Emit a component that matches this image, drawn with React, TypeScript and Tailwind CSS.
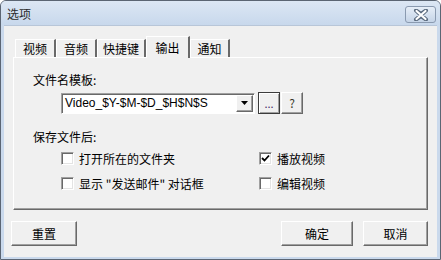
import { useState } from 'react';

const FONT = { fontFamily: '"Noto Sans CJK SC", "Liberation Sans", sans-serif' };

const tabs = [
  { label: '视频', w: 'w-[41px]' },
  { label: '音频', w: 'w-[41px]' },
  { label: '快捷键', w: 'w-[49px]' },
  { label: '输出', w: 'w-[44px]' },
  { label: '通知', w: 'w-[40px]' },
];

const CloseGlyph = () => (
  <svg width="16" height="12" viewBox="0 0 16 12">
    <path
      d="M3 1.5 L8 5 L13 1.5 M3 10.5 L8 7 L13 10.5 M3 1.5 L13 10.5 M13 1.5 L3 10.5"
      stroke="#5a6a7e"
      strokeWidth="4"
      strokeLinecap="round"
      fill="none"
    />
    <path d="M3.5 2 L12.5 10 M12.5 2 L3.5 10" stroke="#ffffff" strokeWidth="2.2" strokeLinecap="round" fill="none" />
  </svg>
);

const Checkbox = ({ checked, label }: { checked?: boolean; label: string }) => (
  <div className="flex items-center h-[13px]">
    <div className="w-[13px] h-[13px] bg-white border border-t-[#a0a0a0] border-l-[#a0a0a0] border-r-[#ffffff] border-b-[#ffffff] shadow-[inset_1px_1px_0_#696969,inset_-1px_-1px_0_#e3e3e3] flex items-center justify-center">
      {checked && (
        <svg width="9" height="9" viewBox="0 0 9 9">
          <path d="M1 4 L3.5 6.5 L8 1.5" stroke="#000" strokeWidth="1.8" fill="none" />
        </svg>
      )}
    </div>
    <span className="ml-[5px] text-[12px] leading-none text-black">{label}</span>
  </div>
);

const RaisedButton = ({ children, className }: { children: React.ReactNode; className?: string }) => (
  <button
    className={`h-[25px] bg-[#f0f0f0] border border-t-white border-l-white border-r-[#696969] border-b-[#696969] shadow-[inset_-1px_-1px_0_#a0a0a0] text-[12px] text-black flex items-center justify-center ${className ?? ''}`}
  >
    {children}
  </button>
);

export default function App() {
  const [active] = useState(3);

  return (
    <div
      className="w-[441px] h-[260px] bg-[#cad9ec] border border-[#5b6573] rounded-t-[6px] flex flex-col overflow-hidden"
      style={FONT}
    >
      {/* Title bar */}
      <div className="h-[24px] flex items-center justify-between pl-[6px] pr-[4px] bg-gradient-to-b from-[#dce7f4] to-[#c8d8ec]">
        <span className="text-[12px] text-[#2b2b2b] mt-[2px]">选项</span>
        <div className="w-[31px] h-[17px] mt-[3px] rounded-[3px] border border-[#8a9ab0] bg-gradient-to-b from-[#e6eef8] to-[#c5d4e7] flex items-center justify-center">
          <CloseGlyph />
        </div>
      </div>

      {/* Client area */}
      <div className="flex-1 mx-[3px] mb-[2px] bg-[#f0f0f0] border-t border-[#b8c6d8] pl-[9px] pr-[8px] pt-[10px] flex flex-col">
        {/* Tabs */}
        <div className="flex items-end h-[21px] pl-[2px] relative z-10">
          {tabs.map((t, i) =>
            i === active ? (
              <div
                key={t.label}
                className={`h-[22px] -mb-[1px] ${t.w} bg-[#f0f0f0] border-t border-l border-white border-r-2 border-r-[#696969] flex items-start justify-center pt-[2px] text-[12px] text-black`}
              >
                {t.label}
              </div>
            ) : (
              <div
                key={t.label}
                className={`h-[18px] ${t.w} bg-[#f0f0f0] border-t border-l border-white border-r-2 border-r-[#696969] flex items-center justify-center text-[12px] text-black`}
              >
                {t.label}
              </div>
            )
          )}
        </div>

        {/* Tab panel */}
        <div className="h-[153px] w-[415px] border border-t-white border-l-white border-r-[#696969] border-b-[#696969] shadow-[inset_-1px_-1px_0_#a0a0a0] pl-[19px] pt-[16px]">
          <div className="text-[12px] leading-none text-black">文件名模板:</div>

          <div className="flex items-center mt-[6px] ml-[28px]">
            <div className="w-[194px] h-[21px] bg-white border border-t-[#a0a0a0] border-l-[#a0a0a0] border-r-white border-b-white shadow-[inset_1px_1px_0_#696969] flex items-center">
              <span
                className="flex-1 pl-[3px] text-[12px] text-black leading-none"
                style={{ fontFamily: '"Liberation Sans", Arial, sans-serif' }}
              >
                Video_$Y-$M-$D_$H$N$S
              </span>
              <div className="w-[17px] h-[17px] mr-[1px] bg-[#f0f0f0] border border-t-white border-l-white border-r-[#696969] border-b-[#696969] shadow-[inset_-1px_-1px_0_#a0a0a0] flex items-center justify-center">
                <svg width="7" height="4" viewBox="0 0 7 4">
                  <path d="M0 0 H7 L3.5 4 Z" fill="#000" />
                </svg>
              </div>
            </div>
            <button className="ml-[3px] w-[22px] h-[22px] bg-[#f0f0f0] border border-[#3c3c3c] shadow-[inset_1px_1px_0_#ffffff,inset_-1px_-1px_0_#a0a0a0] flex items-center justify-center text-[11px] text-[#4a2d6a] leading-none">
              ...
            </button>
            <button className="ml-[1px] w-[22px] h-[22px] bg-[#f0f0f0] border border-t-white border-l-white border-r-[#696969] border-b-[#696969] shadow-[inset_-1px_-1px_0_#a0a0a0] flex items-center justify-center text-[12px] text-[#3a3a2a] leading-none">
              ?
            </button>
          </div>

          <div className="text-[12px] leading-none text-black mt-[17px]">保存文件后:</div>

          <div className="grid grid-cols-[198px_1fr] gap-y-[12px] ml-[28px] mt-[9px]">
            <Checkbox label="打开所在的文件夹" />
            <Checkbox checked label="播放视频" />
            <Checkbox label={'显示 "发送邮件" 对话框'} />
            <Checkbox label="编辑视频" />
          </div>
        </div>

        {/* Footer buttons */}
        <div className="flex items-center mt-[11px] -ml-[2px] pr-[1px]">
          <RaisedButton className="w-[66px]">重置</RaisedButton>
          <div className="flex-1" />
          <RaisedButton className="w-[72px]">确定</RaisedButton>
          <RaisedButton className="w-[65px] ml-[10px]">取消</RaisedButton>
        </div>
      </div>
    </div>
  );
}
